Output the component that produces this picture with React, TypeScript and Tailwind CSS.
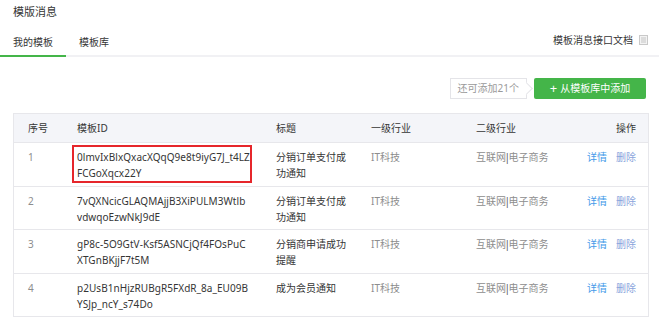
import React from "react";

const ROWS = [
  {
    no: "1",
    id: ["0lmvIxBlxQxacXQqQ9e8t9iyG7J_t4LZ", "FCGoXqcx22Y"],
    title: ["分销订单支付成", "功通知"],
    marked: true,
    h: "h-[44px]",
  },
  {
    no: "2",
    id: ["7vQXNcicGLAQMAjjB3XiPULM3Wtlb", "vdwqoEzwNkJ9dE"],
    title: ["分销订单支付成", "功通知"],
    h: "h-[43px]",
  },
  {
    no: "3",
    id: ["gP8c-5O9GtV-Ksf5ASNCjQf4FOsPuC", "XTGnBKjjF7t5M"],
    title: ["分销商申请成功", "提醒"],
    h: "h-[44px]",
  },
  {
    no: "4",
    id: ["p2UsB1nHjzRUBgR5FXdR_8a_EU09B", "YSJp_ncY_s74Do"],
    title: ["成为会员通知"],
    h: "h-[43px]",
  },
];

function DocIcon() {
  return (
    <svg width="9" height="10" viewBox="0 0 9 10" className="ml-[6px]">
      <rect x="0.5" y="0.5" width="8" height="9" fill="#f3f3f3" stroke="#c9c9c9" />
      <rect x="2" y="2" width="5" height="6" fill="#dcdcdc" />
    </svg>
  );
}

export default function App() {
  return (
    <div
      className="h-[333px] w-[659px] overflow-hidden bg-white text-[10px] text-[#353535]"
      style={{ fontFamily: '"Noto Sans", "Noto Sans CJK SC", sans-serif' }}
    >
      <div className="h-[24px] pl-[13px] text-[11px] leading-[24px] text-[#353535]">模版消息</div>

      <div className="flex items-end justify-between border-b-2 border-[#f1f1f4]">
        <div className="-mb-[2px] flex">
          <div className="border-b-2 border-[#44b549] px-[13px] pb-[5px] pt-[10px] leading-[16px]">我的模板</div>
          <div className="px-[13px] pb-[7px] pt-[10px] leading-[16px]">模板库</div>
        </div>
        <div className="flex items-center pb-[7px] pr-[11px] leading-[16px]">
          <span>模板消息接口文档</span>
          <DocIcon />
        </div>
      </div>

      <div className="mt-[21px] flex items-center justify-end pr-[13px]">
        <div className="relative flex h-[21px] items-center border border-[#e4e4e8] px-[7px] text-[#9a9a9a]">
          还可添加21个
          <span className="absolute -right-[5px] top-[5px] h-[9px] w-[9px] rotate-45 border-r border-t border-[#e4e4e8] bg-white" />
        </div>
        <button className="ml-[7px] flex h-[21px] w-[112px] items-center justify-center rounded-[2px] bg-[#44b549] text-white">
          <span className="mr-[3px] text-[13px] leading-none">+</span>
          从模板库中添加
        </button>
      </div>

      <div className="ml-[13px] mt-[14px] w-[636px] border border-[#e7e7eb]">
        <div className="flex h-[28px] items-center bg-[#f4f5f9] leading-[16px]">
          <div className="w-[63px] pl-[14px]">序号</div>
          <div className="w-[199px]">模板ID</div>
          <div className="w-[95px]">标题</div>
          <div className="w-[105px]">一级行业</div>
          <div className="flex-1">二级行业</div>
          <div className="pr-[12px]">操作</div>
        </div>
        {ROWS.map((r) => (
          <div key={r.no} className={`flex items-start border-t border-[#e7e7eb] pt-[6px] leading-[16px] ${r.h}`}>
            <div className="w-[63px] pl-[14px] text-[#8d8d8d]">{r.no}</div>
            <div className="w-[199px] tracking-[0.05px]">
              {r.marked ? (
                <div className="-ml-[5px] -mt-[4px] w-fit border-2 border-[#e6262b] pb-0 pl-[3px] pr-0 pt-[2px]">
                  {r.id[0]}
                  <br />
                  {r.id[1]}
                </div>
              ) : (
                <div>
                  {r.id[0]}
                  <br />
                  {r.id[1]}
                </div>
              )}
            </div>
            <div className="w-[95px]">
              {r.title.map((t) => (
                <div key={t}>{t}</div>
              ))}
            </div>
            <div className="w-[105px] text-[#8d8d8d]">IT科技</div>
            <div className="flex-1 text-[#8d8d8d]">
              互联网<span className="-mx-[1.5px] text-[#555]">|</span>电子商务
            </div>
            <div className="flex gap-[9px] pr-[12px]">
              <span className="text-[#459ae9]">详情</span>
              <span className="text-[#8aa4dc]">删除</span>
            </div>
          </div>
        ))}
      </div>
    </div>
  );
}
